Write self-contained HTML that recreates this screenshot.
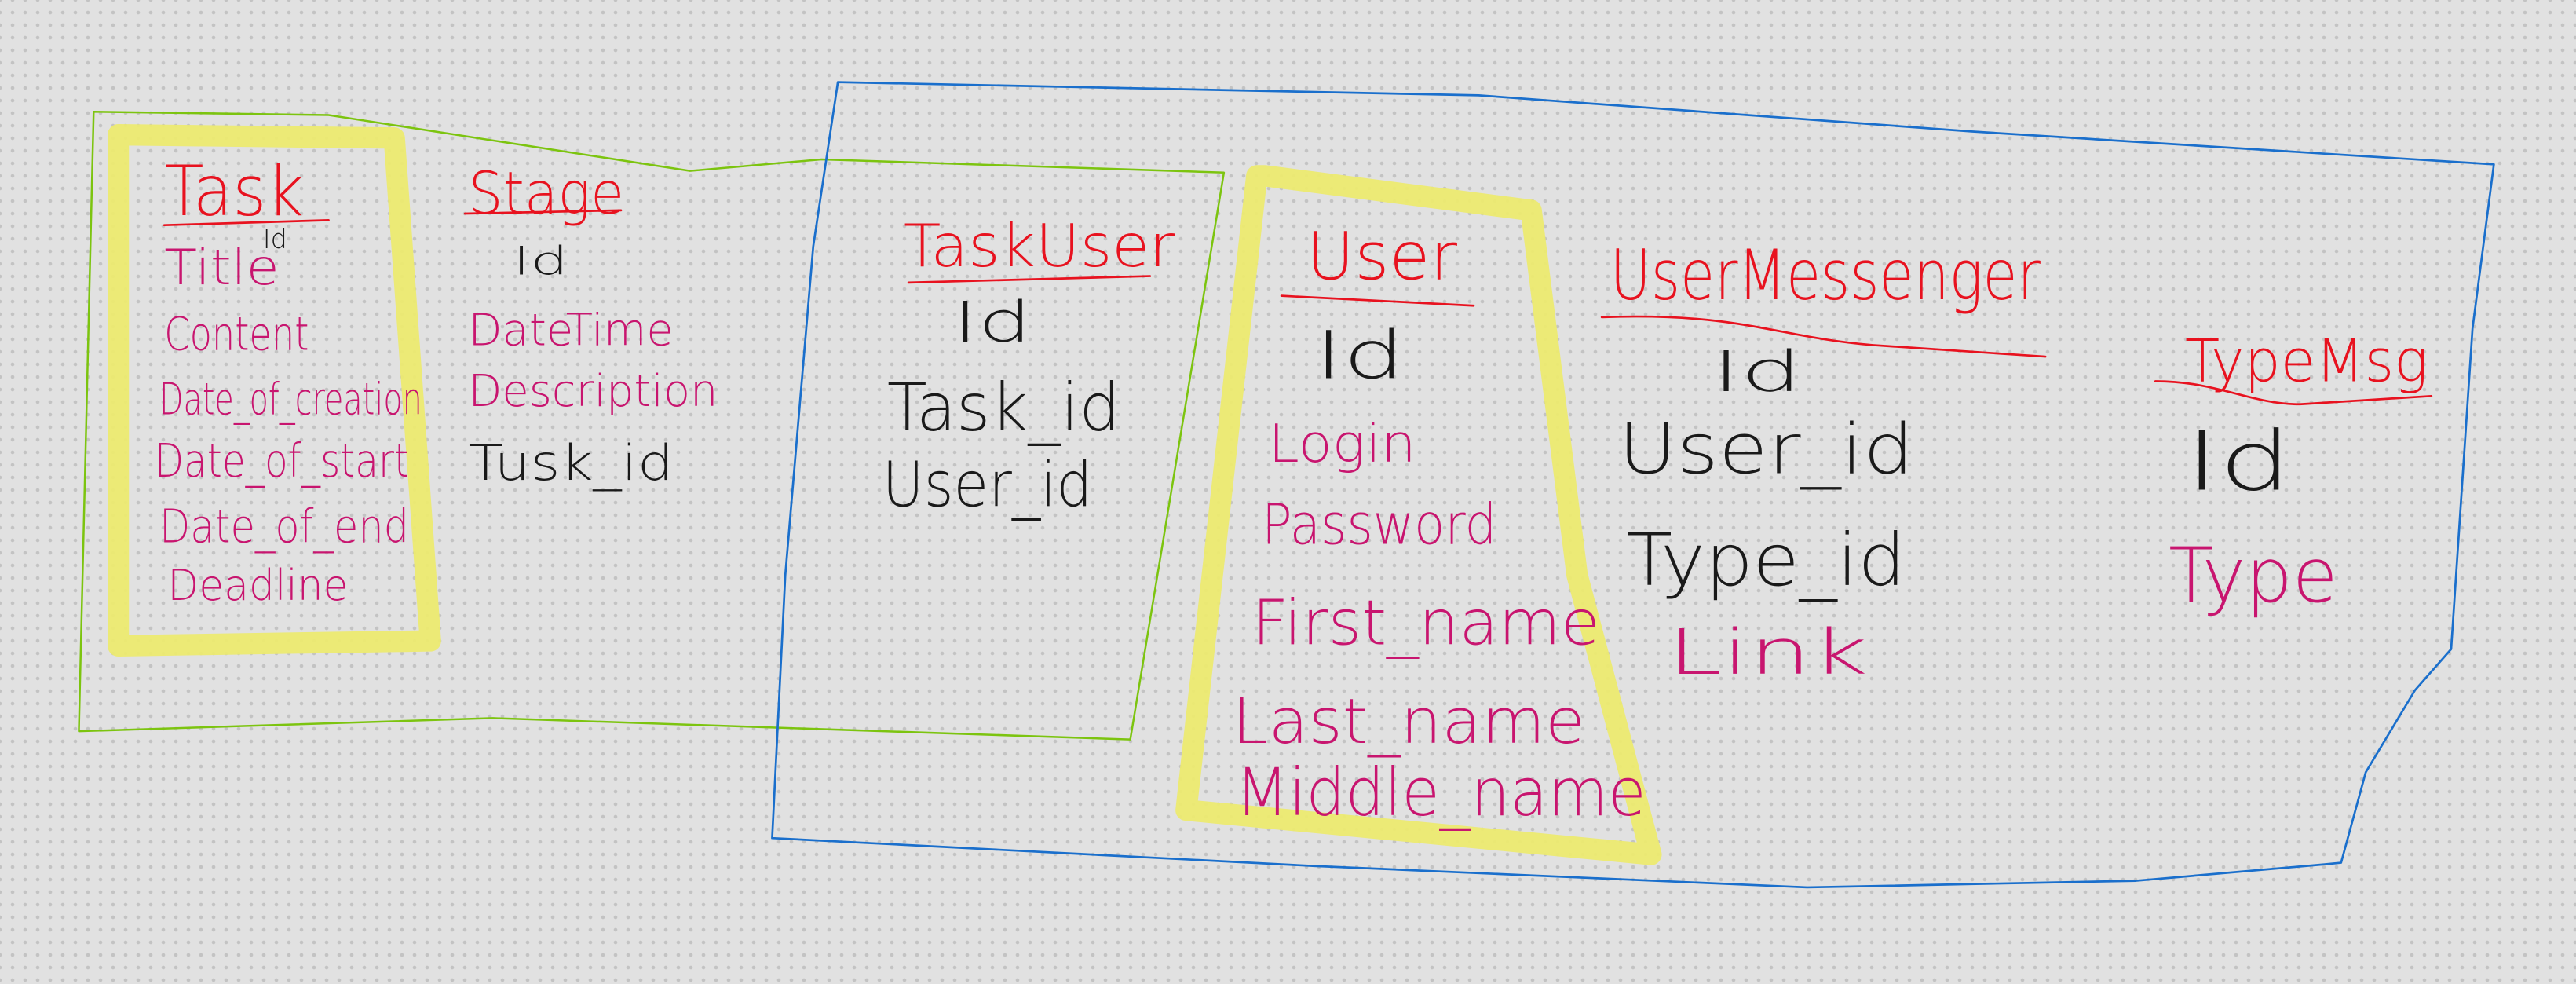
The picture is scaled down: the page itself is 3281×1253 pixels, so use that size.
<!DOCTYPE html>
<html><head><meta charset="utf-8"><style>
html,body{margin:0;padding:0}
body{width:3281px;height:1253px;overflow:hidden;background-color:#e1e1e1;
background-image:radial-gradient(circle at 8px 8px,#c3c3c3 2px,transparent 2.6px);
background-size:16px 16px;background-position:-8px -8px}
svg{position:absolute;left:0;top:0}
text{font-family:"DejaVu Sans","Liberation Sans",sans-serif;font-weight:200}
.r{fill:#e8121f}.m{fill:#c8156f}.k{fill:#1a1a1a}
</style></head><body>
<svg width="3281" height="1253" viewBox="0 0 1568 598.8" xmlns="http://www.w3.org/2000/svg">
<g fill="none" stroke-linejoin="round" stroke-linecap="round">
<path d="M57,68 L200,70 L420,104 L500,97 L745,105 L688,450 L300,437 L48,445 Z" stroke="#7cc40f" stroke-width="1.2"/>
<path d="M510,50 L900,58 L1200,80 L1518,100 L1505,200 L1492,395 L1470,420 L1440,470 L1425,525 L1415,526 L1300,536 L1100,540 L800,527 L470,510 L478,350 L495,150 Z" stroke="#1a6fcc" stroke-width="1.3"/>
<path d="M72,82 L240,84 L262,390 L72,393 Z" stroke="#ecea70" stroke-width="13" opacity="0.95"/>
<path d="M770,107 L932,128 L960,350 L1005,520 L722,493 L765,107 Z" stroke="#ecea70" stroke-width="13" opacity="0.95"/>
<g stroke="#e8121f" stroke-width="1.3">
<path d="M100,137 L200,134"/>
<path d="M283,130 L378,128"/>
<path d="M553,172 L700,168"/>
<path d="M780,180 L897,186"/>
<path d="M975,193 C1060,190 1080,205 1140,210 L1245,217"/>
<path d="M1312,232 C1350,232 1370,246 1400,246 L1480,241"/>
</g>
</g>
<text class="r" x="100" y="131" font-size="42" textLength="85" lengthAdjust="spacingAndGlyphs">Task</text>
<text class="k" x="160" y="151" font-size="16">Id</text>
<text class="m" x="100" y="173" font-size="30" textLength="70" lengthAdjust="spacingAndGlyphs">Title</text>
<text class="m" x="100" y="213" font-size="28" textLength="88" lengthAdjust="spacingAndGlyphs">Content</text>
<text class="m" x="97" y="252" font-size="27" textLength="160" lengthAdjust="spacingAndGlyphs">Date_of_creation</text>
<text class="m" x="94" y="290" font-size="28" textLength="155" lengthAdjust="spacingAndGlyphs">Date_of_start</text>
<text class="m" x="97" y="330" font-size="28" textLength="152" lengthAdjust="spacingAndGlyphs">Date_of_end</text>
<text class="m" x="102" y="365" font-size="26" textLength="110" lengthAdjust="spacingAndGlyphs">Deadline</text>
<text class="r" x="285" y="130" font-size="36" textLength="95" lengthAdjust="spacingAndGlyphs">Stage</text>
<text class="k" x="312" y="167" font-size="24" textLength="34" lengthAdjust="spacingAndGlyphs">Id</text>
<text class="m" x="285" y="210" font-size="27" textLength="125" lengthAdjust="spacingAndGlyphs">DateTime</text>
<text class="m" x="285" y="247" font-size="27" textLength="152" lengthAdjust="spacingAndGlyphs">Description</text>
<text class="k" x="285" y="292" font-size="30" textLength="125" lengthAdjust="spacingAndGlyphs">Tusk_id</text>
<text class="r" x="550" y="162" font-size="36" textLength="165" lengthAdjust="spacingAndGlyphs">TaskUser</text>
<text class="k" x="580" y="208" font-size="34" textLength="48" lengthAdjust="spacingAndGlyphs">Id</text>
<text class="k" x="540" y="262" font-size="40" textLength="142" lengthAdjust="spacingAndGlyphs">Task_id</text>
<text class="k" x="537" y="308" font-size="38" textLength="128" lengthAdjust="spacingAndGlyphs">User_id</text>
<text class="r" x="795" y="170" font-size="40" textLength="92" lengthAdjust="spacingAndGlyphs">User</text>
<text class="k" x="800" y="230" font-size="40" textLength="55" lengthAdjust="spacingAndGlyphs">Id</text>
<text class="m" x="772" y="281" font-size="32" textLength="90" lengthAdjust="spacingAndGlyphs">Login</text>
<text class="m" x="768" y="331" font-size="34" textLength="143" lengthAdjust="spacingAndGlyphs">Password</text>
<text class="m" x="762" y="392" font-size="38" textLength="212" lengthAdjust="spacingAndGlyphs">First_name</text>
<text class="m" x="750" y="452" font-size="38" textLength="215" lengthAdjust="spacingAndGlyphs">Last_name</text>
<text class="m" x="752" y="496" font-size="40" textLength="250" lengthAdjust="spacingAndGlyphs">Middle_name</text>
<text class="r" x="980" y="182" font-size="42" textLength="262" lengthAdjust="spacingAndGlyphs">UserMessenger</text>
<text class="k" x="1042" y="238" font-size="34" textLength="55" lengthAdjust="spacingAndGlyphs">Id</text>
<text class="k" x="985" y="288" font-size="42" textLength="180" lengthAdjust="spacingAndGlyphs">User_id</text>
<text class="k" x="990" y="356" font-size="44" textLength="170" lengthAdjust="spacingAndGlyphs">Type_id</text>
<text class="m" x="1015" y="410" font-size="38" textLength="122" lengthAdjust="spacingAndGlyphs">Link</text>
<text class="r" x="1330" y="232" font-size="36" textLength="148" lengthAdjust="spacingAndGlyphs">TypeMsg</text>
<text class="k" x="1330" y="298" font-size="50" textLength="65" lengthAdjust="spacingAndGlyphs">Id</text>
<text class="m" x="1320" y="366" font-size="46" textLength="103" lengthAdjust="spacingAndGlyphs">Type</text>
</svg>
</body></html>
